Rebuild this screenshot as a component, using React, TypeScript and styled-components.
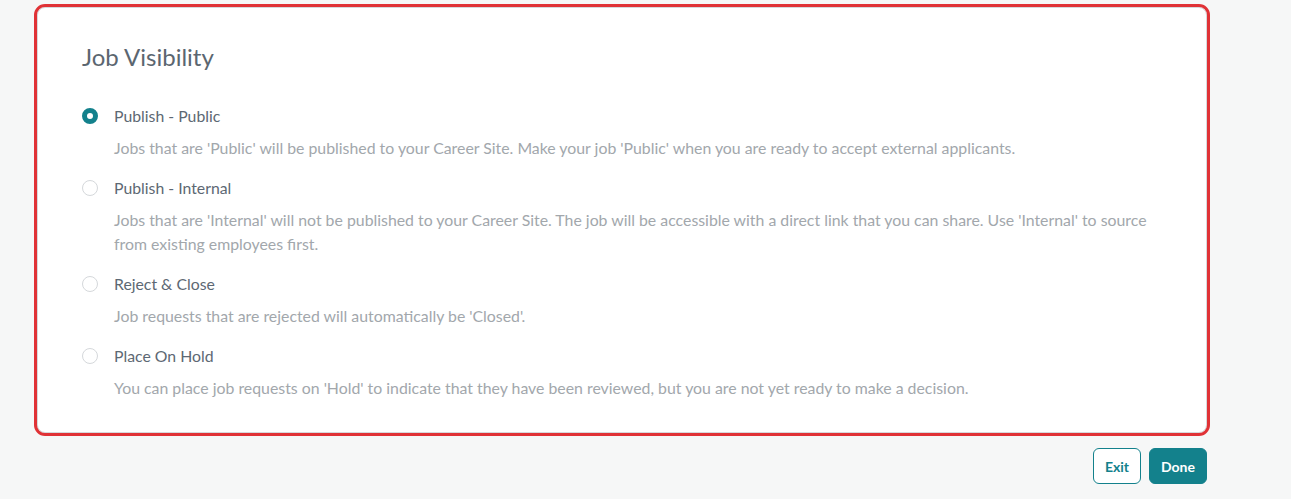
import styled, { createGlobalStyle } from 'styled-components';
import { useState } from 'react';

const GlobalStyle = createGlobalStyle`
    html, body {
        margin: 0;
        padding: 0;
        background-color: #f6f7f7;
        font-family: Lato, 'Noto Sans', sans-serif;
    }
`;

const Page = styled.div`
    padding: 7px 84px 14px 37px;
`;

const Card = styled.section`
    background-color: #ffffff;
    border: 1px solid #d6d9dc;
    border-radius: 8px;
    outline: 3px solid #e03236;
    outline-offset: 0px;
    padding: 33px 44px 32px 44px;
`;

const Title = styled.h2`
    margin: 0 0 31px 0;
    font-size: 24px;
    line-height: 32px;
    font-weight: 400;
    color: #5b6670;
`;

const Options = styled.div`
    display: flex;
    flex-direction: column;
    gap: 16px;
`;

const Option = styled.label`
    display: flex;
    flex-direction: column;
    gap: 8px;
    cursor: pointer;
`;

const OptionHead = styled.div`
    display: flex;
    align-items: center;
    gap: 16px;
    height: 24px;
    line-height: 22px;
`;

const Radio = styled.span<{ checked: boolean }>`
    box-sizing: border-box;
    width: 16px;
    height: 16px;
    border-radius: 50%;
    background-color: #ffffff;
    border: ${(props) => (props.checked ? '5px solid #13818c' : '1px solid #d5d8db')};
    flex-shrink: 0;
`;

const OptionLabel = styled.span`
    font-size: 15.8px;
    color: #5d6873;
    margin-top: -1px;
`;

const OptionText = styled.p`
    margin: 0;
    padding-left: 32px;
    font-size: 15.85px;
    line-height: 24px;
    color: #a2a7ac;
`;

const Actions = styled.div`
    display: flex;
    justify-content: flex-end;
    gap: 8px;
    margin-top: 15px;
`;

const Button = styled.button<{ primary?: boolean }>`
    height: 36px;
    padding: 0 11px;
    border-radius: 6px;
    font-family: Lato, 'Noto Sans', sans-serif;
    font-size: 14px;
    font-weight: 700;
    border: 1px solid #13818c;
    background-color: ${(props) => (props.primary ? '#13818c' : '#ffffff')};
    color: ${(props) => (props.primary ? '#ffffff' : '#13818c')};
    cursor: pointer;
`;

const options = [
    {
        id: 'public',
        label: 'Publish - Public',
        text: "Jobs that are 'Public' will be published to your Career Site. Make your job 'Public' when you are ready to accept external applicants.",
    },
    {
        id: 'internal',
        label: 'Publish - Internal',
        text: "Jobs that are 'Internal' will not be published to your Career Site. The job will be accessible with a direct link that you can share. Use 'Internal' to source from existing employees first.",
    },
    {
        id: 'reject',
        label: 'Reject & Close',
        text: "Job requests that are rejected will automatically be 'Closed'.",
    },
    {
        id: 'hold',
        label: 'Place On Hold',
        text: "You can place job requests on 'Hold' to indicate that they have been reviewed, but you are not yet ready to make a decision.",
    },
];

function App() {
    const [selected, setSelected] = useState('public');
    return (
        <>
            <GlobalStyle />
            <Page>
                <Card>
                    <Title>Job Visibility</Title>
                    <Options>
                        {options.map((o) => (
                            <Option key={o.id} onClick={() => setSelected(o.id)}>
                                <OptionHead>
                                    <Radio checked={selected === o.id} />
                                    <OptionLabel>{o.label}</OptionLabel>
                                </OptionHead>
                                <OptionText>{o.text}</OptionText>
                            </Option>
                        ))}
                    </Options>
                </Card>
                <Actions>
                    <Button>Exit</Button>
                    <Button primary>Done</Button>
                </Actions>
            </Page>
        </>
    );
}
export default App;
